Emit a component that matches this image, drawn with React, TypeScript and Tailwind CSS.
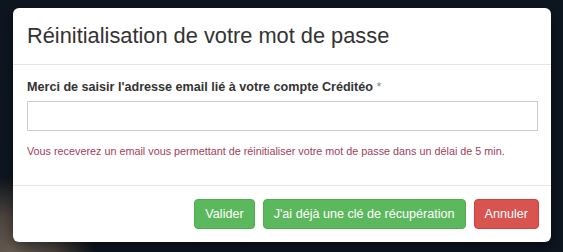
import React from "react";

export default function App() {
  return (
    <div
      className="w-[563px] h-[252px] overflow-hidden bg-[#0e1620] bg-[radial-gradient(ellipse_80px_75px_at_15px_252px,#6a5f56_0%,#4d453f_50%,#0e1620_100%)] pt-[8px] pl-[13px]"
      style={{ fontFamily: '"Liberation Sans", Arial, sans-serif' }}
    >
      <div className="w-[538px] h-[234px] bg-white rounded-[6px] flex flex-col shadow-[0_5px_15px_rgba(0,0,0,0.5)]">
        <div className="px-[14px] pt-[16px] pb-[16px] border-b border-[#e5e5e5]">
          <h4 className="text-[21.8px] leading-[24px] text-[#333333] font-normal">
            Réinitialisation de votre mot de passe
          </h4>
        </div>
        <div className="px-[14px] pt-[13px] flex flex-col">
          <label className="text-[12.6px] leading-[18px] font-bold text-[#333333] mb-[5px]">
            Merci de saisir l'adresse email lié à votre compte Créditéo{" "}
            <span className="text-[#7a8a9a] font-normal">*</span>
          </label>
          <input
            type="email"
            className="w-[511px] h-[30px] border border-[#cccccc] bg-white outline-none px-[10px] text-[12.6px]"
          />
          <p className="mt-[13px] text-[10.8px] leading-[15px] text-[#a3405a]">
            Vous receverez un email vous permettant de réinitialiser votre mot de passe dans un délai de 5 min.
          </p>
        </div>
        <div className="mt-auto border-t border-[#e5e5e5] pt-[13px] pb-[13px] pr-[12px] flex justify-end gap-[8px]">
          <button className="h-[30px] px-[10px] rounded-[4px] bg-[#5cb85c] border border-[#4cae4c] text-white text-[12.6px]">
            Valider
          </button>
          <button className="h-[30px] px-[10px] rounded-[4px] bg-[#5cb85c] border border-[#4cae4c] text-white text-[12.6px]">
            J'ai déjà une clé de récupération
          </button>
          <button className="h-[30px] px-[10px] rounded-[4px] bg-[#d9534f] border border-[#d43f3a] text-white text-[12.6px]">
            Annuler
          </button>
        </div>
      </div>
    </div>
  );
}
